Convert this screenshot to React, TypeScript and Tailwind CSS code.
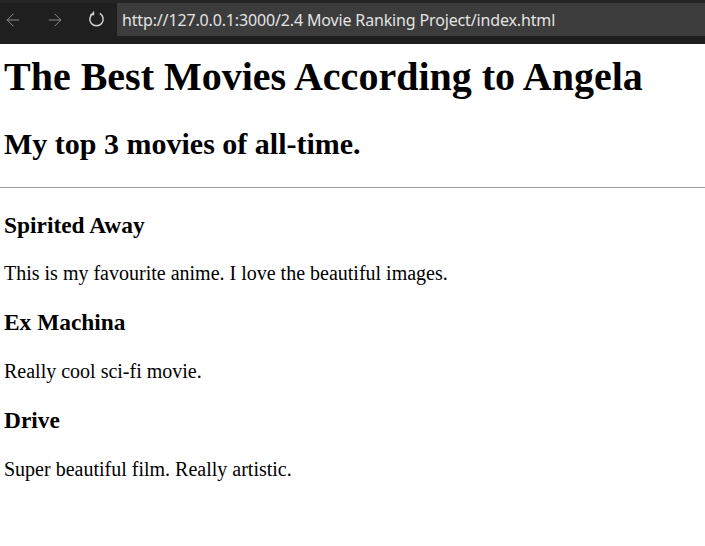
import { ArrowLeft, ArrowRight } from "lucide-react";

const movies = [
  { title: "Spirited Away", note: "This is my favourite anime. I love the beautiful images." },
  { title: "Ex Machina", note: "Really cool sci-fi movie." },
  { title: "Drive", note: "Super beautiful film. Really artistic." },
];

export default function App() {
  return (
    <div className="min-h-[546px] bg-white">
      {/* Browser chrome */}
      <div className="h-[44px] bg-[#1f1f1f] border-t-[3px] border-[#252525] flex items-start">
        <div className="flex items-center h-[33px] pl-[3px] gap-[22px] text-[#8b8b8b]">
          <ArrowLeft className="w-[20px] h-[20px]" strokeWidth={1.2} />
          <ArrowRight className="w-[20px] h-[20px]" strokeWidth={1.2} />
          <svg viewBox="0 0 20 20" className="w-[19px] h-[19px] text-[#d6d6d6]" fill="none" stroke="currentColor" strokeWidth="1.5">
            <path d="M13.5 3.6A7 7 0 1 1 6.5 3.6" />
            <path d="M6.8 1.5v3.2H3.6" />
          </svg>
        </div>
        <div className="ml-[11px] flex-1 h-[33px] bg-[#3c3c3c] flex items-center pl-[5px] text-[#e3e3e3] text-[16px] font-['Noto_Sans',sans-serif] tracking-[-0.15px]">
          http://127.0.0.1:3000/2.4 Movie Ranking Project/index.html
        </div>
      </div>

      {/* Page */}
      <div className="px-[4px] pt-[10px] text-black font-['Liberation_Serif','Times_New_Roman',serif]">
        <h1 className="text-[40px] leading-[46px] font-bold">The Best Movies According to Angela</h1>
        <h2 className="mt-[27px] text-[30px] leading-[34.5px] font-bold">My top 3 movies of all-time.</h2>
        <hr className="mt-[25px] -mx-[4px] border-0 border-t border-[#9c9c9c]" />
        <div className="pt-[24px]">
          {movies.map((m) => (
            <div key={m.title} className="mb-[23.4px]">
              <h3 className="text-[23.4px] leading-[27.4px] font-bold">{m.title}</h3>
              <p className="mt-[23.4px] text-[20px] leading-[23.5px]">{m.note}</p>
            </div>
          ))}
        </div>
      </div>
    </div>
  );
}
